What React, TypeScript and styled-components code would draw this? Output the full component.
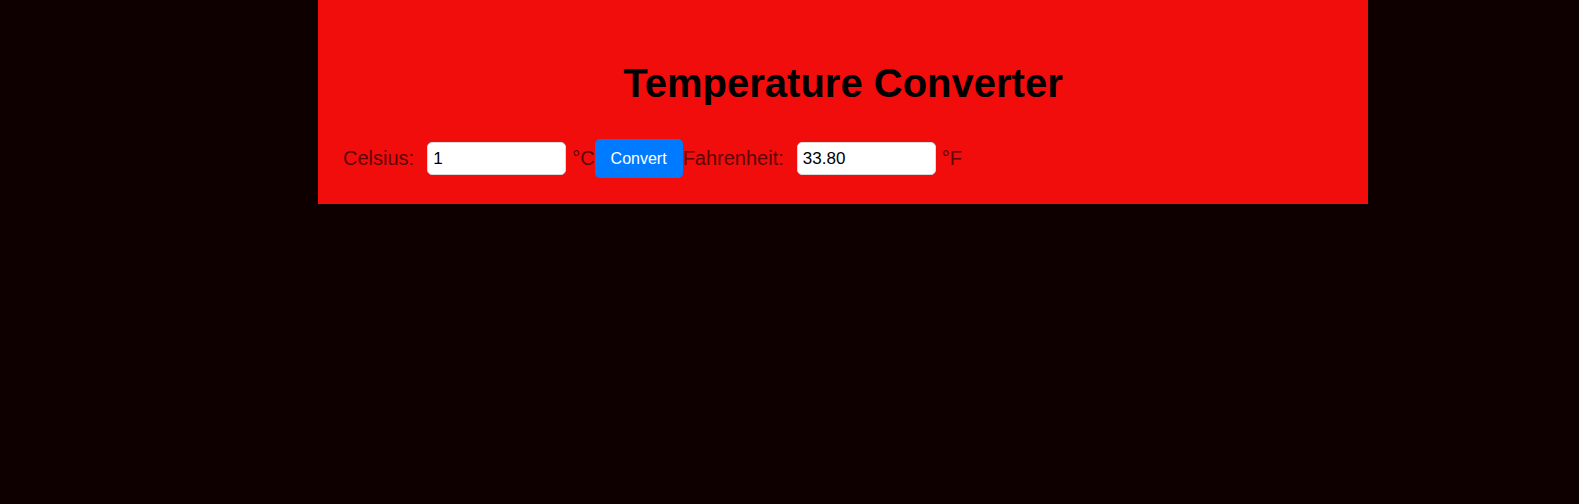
import React, { FC, useState } from "react";
import styled, { createGlobalStyle } from "styled-components";

const GlobalStyle = createGlobalStyle`
    html, body {
        margin: 0;
        padding: 0;
        background: #0f0000;
        font-family: "Liberation Sans", Arial, sans-serif;
    }
`;

const toFahrenheit = (c: number): string => ((c * 9) / 5 + 32).toFixed(2);

const App: FC = () => {
    const [celsius, setCelsius] = useState("1");
    const [fahrenheit, setFahrenheit] = useState("33.80");

    const convert = () => {
        const value = parseFloat(celsius);
        if (!isNaN(value)) setFahrenheit(toFahrenheit(value));
    };

    return (
        <>
            <GlobalStyle />
            <Page>
                <Panel>
                    <Title>Temperature Converter</Title>
                    <Row>
                        <Label htmlFor="celsius">Celsius:</Label>
                        <Input id="celsius" type="text" value={celsius} onChange={(e) => setCelsius(e.target.value)} />
                        <Unit>°C</Unit>
                        <ConvertButton onClick={convert}>Convert</ConvertButton>
                        <Label htmlFor="fahrenheit">Fahrenheit:</Label>
                        <Input id="fahrenheit" type="text" value={fahrenheit} readOnly />
                        <Unit>°F</Unit>
                    </Row>
                </Panel>
            </Page>
        </>
    );
};

export default App;

const Page = styled.div`
    min-height: 504px;
    padding-left: 318px;
    box-sizing: border-box;
`;

const Panel = styled.div`
    width: 1050px;
    background: #f20d0d;
    padding: 60px 25px 26px;
    box-sizing: border-box;
`;

const Title = styled.h1`
    margin: 0 0 33px;
    font-size: 40px;
    line-height: 46px;
    font-weight: bold;
    color: #000;
    text-align: center;
`;

const Row = styled.div`
    display: flex;
    align-items: center;
    height: 39px;
`;

const Label = styled.label`
    font-size: 20px;
    line-height: 23px;
    color: #5c0606;
    margin-right: 13px;
`;

const Unit = styled.span`
    font-size: 20px;
    line-height: 23px;
    color: #5c0606;
    margin-left: 6px;
`;

const Input = styled.input`
    width: 139px;
    height: 33px;
    box-sizing: border-box;
    padding: 0 5px;
    border: 1px solid #d9d9d9;
    border-radius: 5px;
    background: #fff;
    font-family: "Liberation Sans", Arial, sans-serif;
    font-size: 17px;
    color: #000;
    outline: none;
`;

const ConvertButton = styled.button`
    height: 39px;
    padding: 0 16px;
    border: none;
    border-radius: 5px;
    background: #007bff;
    color: #fff;
    font-family: "Liberation Sans", Arial, sans-serif;
    font-size: 16px;
    cursor: pointer;
`;
